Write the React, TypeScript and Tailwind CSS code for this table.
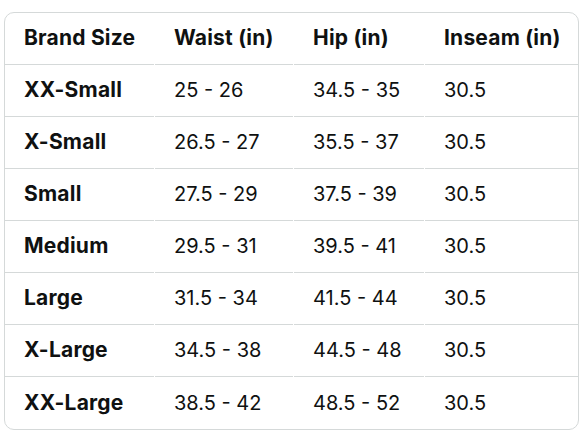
const headers = ["Brand Size", "Waist (in)", "Hip (in)", "Inseam (in)"];

const rows = [
  ["XX-Small", "25 - 26", "34.5 - 35", "30.5"],
  ["X-Small", "26.5 - 27", "35.5 - 37", "30.5"],
  ["Small", "27.5 - 29", "37.5 - 39", "30.5"],
  ["Medium", "29.5 - 31", "39.5 - 41", "30.5"],
  ["Large", "31.5 - 34", "41.5 - 44", "30.5"],
  ["X-Large", "34.5 - 38", "44.5 - 48", "30.5"],
  ["XX-Large", "38.5 - 42", "48.5 - 52", "30.5"],
];

export default function App() {
  return (
    <div className="w-[588px] h-[441px] bg-white pt-[12px] pl-[4px] font-['Inter',sans-serif] text-[#0f1111]">
      <div className="w-[575px] rounded-[10px] border border-[#d5d9d9] overflow-hidden">
        <div className="grid grid-cols-[149px_138px_130px_1fr] gap-x-px">
          {headers.map((h) => (
            <div
              key={h}
              className="h-[52px] flex items-center pl-[19px] pb-[1px] text-[21px] tracking-[0.01em] font-bold border-b border-[#d5d9d9]"
            >
              {h}
            </div>
          ))}
          {rows.map((r, i) =>
            r.map((c, j) => (
              <div
                key={`${i}-${j}`}
                className={`h-[52px] flex items-center pl-[19px] pb-[1px] ${
                  j === 0 ? "text-[21px] tracking-[0.01em] font-bold" : "text-[20px]"
                } ${i < rows.length - 1 ? "border-b border-[#d5d9d9]" : ""}`}
              >
                {c}
              </div>
            ))
          )}
        </div>
      </div>
    </div>
  );
}
